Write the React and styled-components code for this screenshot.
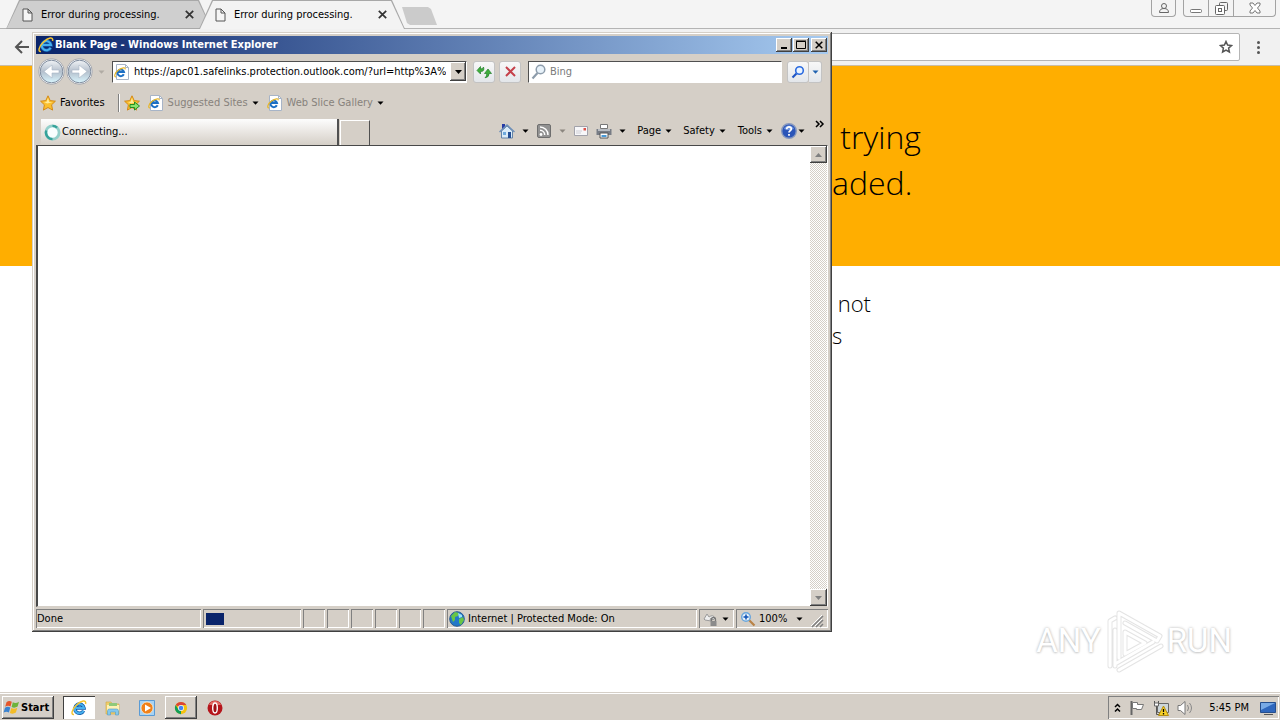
import React from 'react';
import styled, { createGlobalStyle, css } from 'styled-components';

const FACE = '#d5cfc7';
const ui = "'DejaVu Sans Condensed', Tahoma, 'Noto Sans', sans-serif";

const Global = createGlobalStyle`
  * { box-sizing: border-box; }
  body { margin: 0; background: #fff; color: #000; font: 11px/14px ${ui}; }
  button, input { font: inherit; color: inherit; padding: 0; margin: 0; border: 0; background: none; outline: 0; }
  svg { display: block; flex: none; }
`;

const raised = css`
  background: ${FACE};
  box-shadow: inset -1px -1px #404040, inset 1px 1px #fff, inset -2px -2px #808080;
`;
const sunken = css`
  box-shadow: inset 1px 1px #808080, inset -1px -1px #fff;
`;

const Desktop = styled.div`
  position: relative;
  min-height: 100vh;
  display: flex;
  flex-direction: column;
  overflow: hidden;
`;

/* ---------- Chrome ---------- */
const TabStrip = styled.header`
  display: flex;
  align-items: flex-start;
  height: 29px;
  padding-left: 6px;
  background: linear-gradient(#b4b4b4, #b4b4b4) bottom / 100% 1px no-repeat #f4f4f4;
`;
const ChromeTab = styled.div`
  position: relative;
  z-index: ${p => (p.$active ? 1 : 0)};
  display: flex;
  align-items: center;
  gap: 8px;
  width: 206px;
  height: 29px;
  padding: 0 18px 0 16px;
  & + & { margin-left: -13px; }
  &::before, &::after {
    content: '';
    position: absolute;
    z-index: -1;
    inset: 0;
    background: #a8a8a8;
    clip-path: polygon(0 100%, 13px 0, calc(100% - 13px) 0, 100% 100%);
  }
  &::after {
    inset: 1px 1px ${p => (p.$active ? '0' : '1px')};
    background: ${p => (p.$active ? '#f3f3f3' : '#cfcfcf')};
  }
`;
const TabTitle = styled.span`flex: 1; white-space: nowrap;`;
const IconButton = styled.button`
  display: flex;
  align-items: center;
  justify-content: center;
  flex: none;
`;
const NewTab = styled.button`
  width: 35px;
  height: 18px;
  margin: 7px 0 0 -3px;
  background: #cbcbcb;
  clip-path: polygon(0 0, 26px 0, 29px 2px, 100% 100%, 8px 100%, 5px 16px);
`;
const FrameControls = styled.div`
  display: flex;
  margin-left: auto;
  padding-right: 4px;
`;
const FrameGroup = styled.div`
  display: flex;
  height: 17px;
  margin-left: 7px;
  border: 1px solid #a3a3a3;
  border-top: 0;
  border-radius: 0 0 4px 4px;
`;
const FrameButton = styled(IconButton)`
  width: ${p => p.$w || 24}px;
  & + & { border-left: 1px solid #a3a3a3; }
`;
const Toolbar = styled.div`
  display: flex;
  align-items: center;
  gap: 12px;
  height: 37px;
  padding: 0 14px;
  background: #f1f1f1;
  border-bottom: 1px solid #c9bda6;
`;
const Omnibox = styled.label`
  display: flex;
  align-items: center;
  flex: 1;
  height: 28px;
  padding-right: 6px;
  background: #fff;
  border: 1px solid #b5b5b5;
  border-radius: 2px;
  input { flex: 1; }
`;
const Page = styled.main`
  flex: 1;
  font-family: 'Open Sans', 'Noto Sans', sans-serif;
  font-weight: 300;
  white-space: pre;
`;
const Banner = styled.h1`
  height: 200px;
  margin: 0;
  padding: 48px 0 0 65%;
  background: #ffae00;
  font-size: 32px;
  line-height: 46px;
  font-weight: 300;
`;
const Detail = styled.p`
  margin: 0;
  padding: 21px 0 0 65%;
  font-size: 22px;
  line-height: 32px;
`;

/* ---------- Watermark ---------- */
const Watermark = styled.div`
  position: absolute;
  right: 48px;
  bottom: 44px;
  display: flex;
  align-items: center;
  gap: 2px;
  height: 70px;
  color: #fff;
  font: 33px/40px Roboto, 'Liberation Sans', sans-serif;
  text-shadow: 0 0 3px #b4b4b4, 0 1px 2px #ddd;
`;

/* ---------- Internet Explorer ---------- */
const Window = styled.section`
  position: absolute;
  z-index: 2;
  left: 32px;
  top: 32px;
  width: 800px;
  height: 600px;
  display: flex;
  flex-direction: column;
  padding: 4px;
  background: ${FACE};
  box-shadow: inset -1px -1px #404040, inset 1px 1px ${FACE}, inset -2px -2px #808080, inset 2px 2px #fff;
`;
const TitleBar = styled.div`
  display: flex;
  align-items: center;
  gap: 1px;
  height: 18px;
  padding: 0 1px 0 2px;
  background: linear-gradient(90deg, #0a246a, #a6caf0);
  color: #fff;
  font-weight: 700;
`;
const WindowTitle = styled.span`flex: 1;`;
const Caption = styled(IconButton)`
  ${raised}
  width: 16px;
  height: 14px;
  margin-left: ${p => (p.$gap ? 1 : 0)}px;
`;
const NavRow = styled.div`
  display: flex;
  align-items: center;
  height: 35px;
  padding: 0 6px 0 2px;
`;
const HistoryButtons = styled.div`
  display: flex;
  align-items: center;
  gap: 1px;
  width: 74px;
`;
const Recent = styled(IconButton)`margin-left: 4px;`;
const Field = styled.label`
  display: flex;
  align-items: center;
  height: 22px;
  background: #fff;
  border: 1px solid #fff;
  border-top-color: #505050;
  border-left-color: #505050;
  input { flex: 1; min-width: 0; }
`;
const Address = styled(Field)`
  flex: 1;
  gap: 4px;
  padding-left: 1px;
`;
const Search = styled(Field)`
  width: 254px;
  margin: 0 5px 0 7px;
  gap: 3px;
  padding-left: 2px;
  input::placeholder { color: #7b7b7b; opacity: 1; }
`;
const DropButton = styled(IconButton)`
  ${raised}
  width: 16px;
  height: 19px;
`;
const GlassButton = styled(IconButton)`
  width: ${p => p.$w || 22}px;
  height: 22px;
  margin-left: ${p => (p.$joined ? 0 : p.$gap || 0)}px;
  background: linear-gradient(#f8f8f8, #e3e6ea);
  border: 1px solid #c3c3c3;
  border-left-width: ${p => (p.$joined ? 0 : 1)}px;
  border-radius: ${p => (p.$joined ? '0 3px 3px 0' : '3px')};
`;
const FavRow = styled.div`
  display: flex;
  align-items: center;
  height: 28px;
  padding-left: 4px;
`;
const BarButton = styled.button`
  display: flex;
  align-items: center;
  gap: ${p => p.$gap || 4}px;
  margin-right: ${p => p.$after || 0}px;
  color: ${p => (p.$muted ? '#87827c' : '#000')};
  white-space: nowrap;
`;
const Divider = styled.span`
  width: 2px;
  height: 18px;
  margin-right: 4px;
  border-left: 1px solid #808080;
  border-right: 1px solid #fff;
`;
const TabRow = styled.div`
  display: flex;
  align-items: flex-end;
  height: 28px;
  padding: 0 3px 0 5px;
`;
const IeTab = styled.div`
  display: flex;
  align-items: center;
  gap: 1px;
  width: 298px;
  height: 26px;
  padding-left: 3px;
  border-right: 2px solid #505050;
  background: linear-gradient(#fdfdfd, ${FACE});
`;
const IeNewTab = styled.button`
  width: 30px;
  height: 25px;
  margin-left: 1px;
  border: solid #fff;
  border-width: 1px 0 0 1px;
  border-right: 1px solid #505050;
`;
const Commands = styled.div`
  display: flex;
  align-items: center;
  align-self: stretch;
  margin-left: auto;
`;
const More = styled.button`
  align-self: flex-start;
  margin-left: 9px;
`;
const Viewport = styled.div`
  display: flex;
  justify-content: flex-end;
  flex: 1;
  background: #fff;
  border: 2px solid #484848;
  border-right: 1px solid #fff;
  border-bottom: 1px solid ${FACE};
  border-top-width: 1px;
`;
const Scrollbar = styled.div`
  display: flex;
  flex-direction: column;
  justify-content: space-between;
  width: 17px;
  background: repeating-conic-gradient(#fff 0 25%, #d5cfc7 0 50%) 0 0 / 2px 2px;
`;
const ScrollButton = styled(IconButton)`
  ${raised}
  width: 17px;
  height: 17px;
`;
const StatusBar = styled.footer`
  display: flex;
  gap: 2px;
  height: 21px;
  padding-top: 2px;
`;
const Panel = styled.div`
  ${sunken}
  display: flex;
  align-items: center;
  gap: 3px;
  width: ${p => p.$w}px;
  padding: 0 ${p => p.$pad || 1}px;
  ${p => p.$grow && 'flex: 1;'}
  white-space: nowrap;
`;
const Progress = styled.span`
  width: 18px;
  height: 12px;
  background: #0a246a;
`;
const Push = styled.span`flex: 1;`;

/* ---------- Taskbar ---------- */
const Taskbar = styled.nav`
  display: flex;
  align-items: center;
  gap: 2px;
  height: 28px;
  padding: 2px 1px 0 2px;
  background: ${FACE};
  border-top: 1px solid ${FACE};
  box-shadow: inset 0 1px #fff;
`;
const StartButton = styled.button`
  ${raised}
  display: flex;
  align-items: center;
  gap: 1px;
  width: 52px;
  height: 23px;
  margin-right: 7px;
  padding-left: 1px;
  font-weight: 700;
`;
const TaskButton = styled(IconButton)`
  width: 32px;
  height: 23px;
  ${p => p.$state === 'open' && raised}
  ${p => p.$state === 'active' && css`background: #fff; box-shadow: inset 1px 1px #404040, inset -1px -1px #fff;`}
`;
const Tray = styled.div`
  ${sunken}
  display: flex;
  align-items: center;
  gap: 8px;
  height: 23px;
  margin-left: auto;
  padding: 0 3px 0 6px;
`;
const Clock = styled.time`margin: 0 3px 0 8px;`;

/* ---------- Icons ---------- */
const Svg = ({ s = 16, h, vb, children }) => (
  <svg width={s} height={h || s} viewBox={vb || `0 0 ${s} ${h || s}`} fill="none" aria-hidden="true">{children}</svg>
);
const Arrow = ({ c = '#000', up, big }) => (
  <Svg s={7} h={4}><path d={up ? 'M0 4L3.5 0 7 4z' : big ? 'M0 0h7L3.5 4z' : 'M.5 .5h6L3.5 3.8z'} fill={c} /></Svg>
);
const DocIcon = () => (
  <Svg s={11} h={14}><path d="M1 1h5l4 4v8H1zM6 1v4h4" stroke="#555" fill="#f5f5f5" /></Svg>
);
const Cross = ({ s = 9, c = '#333', w = 1.7 }) => (
  <Svg s={s} vb="0 0 9 9"><path d="M.8 .8l7.4 7.4M8.200 .8L.8 8.200" stroke={c} strokeWidth={w} /></Svg>
);
const IeGlyph = ({ s = 16 }) => (
  <Svg s={s} vb="0 0 16 16">
    <path d="M12.6 10.7A4.6 4.6 0 1 1 13 8H5" stroke="#1259a8" strokeWidth="3.400" />
    <path d="M12.6 10.7A4.6 4.6 0 1 1 13 8H5" stroke="#46b0ee" strokeWidth="2" />
    <path d="M3 14.5C-.5 15 .8 9.500 5.500 5S15.500-.6 14.600 4" stroke="#f4c430" strokeWidth="1.500" />
  </Svg>
);
const IePage = () => (
  <Svg>
    <path d="M2.5.5h9l3 3v12h-12z" fill="#fff" stroke="#a7b4c7" />
    <path d="M11.5.5v3h3" stroke="#a7b4c7" />
    <path d="M9.8 10.3A3.3 3.3 0 1 1 10 8H4" stroke="#1c6fc4" strokeWidth="2" />
    <path d="M2 12.8C-.5 13 1 8.5 4.5 6S12 2.8 11 5.4" stroke="#e6b62a" strokeWidth="1.2" />
  </Svg>
);
const Travel = ({ forward }) => (
  <Svg s={27} h={27}>
    <defs>
      <linearGradient id={forward ? 'tf' : 'tb'} x1="0" y1="0" x2="0" y2="1">
        <stop offset="0" stopColor="#f1f3f6" /><stop offset=".5" stopColor="#b4bfcc" /><stop offset="1" stopColor="#d9f5fd" />
      </linearGradient>
    </defs>
    <circle cx="13.5" cy="13.5" r="12.800" fill="#f3f4f6" stroke="#a6a8ae" />
    <circle cx="13.5" cy="13.5" r="11.300" fill={`url(#${forward ? 'tf' : 'tb'})`} stroke="#7f8c9e" />
    <path d={forward ? 'M6 12h7V7l8 6.500-8 6.500V15H6z' : 'M21 12h-7V7l-8 6.500 8 6.500V15h7z'} fill="#fff" stroke="#a9b7c6" strokeWidth=".6" />
  </Svg>
);
const Star = ({ add }) => (
  <Svg>
    <path d="M8 .8l2.2 4.8 5.2.6-3.8 3.6 1 5.3L8 12.5l-4.6 2.6 1-5.3L.6 6.2l5.2-.6z" fill="#fbc02e" stroke="#d48a18" />
    <path d="M8 2.8L9.2 7l3.3.2-5.3 1.3L4 7l2.6-.3z" fill="#ffeb9a" />
    {add && <path d="M6 9.5h4.5V7l5 4-5 4v-2.5H6z" fill="#8be36c" stroke="#248d22" />}
  </Svg>
);
const Refresh = () => (
  <Svg>
    <path d="M1 6.500L4.500 2.500V5Q7 5 7.500 3 9 7.500 4.500 7.500V10z" fill="#3fae3c" stroke="#23802b" strokeWidth=".7" />
    <path d="M12 5l3.500 4.500H13.200Q13 13.500 9 13.800 11 12.500 10.800 9.500H8.500z" fill="#3fae3c" stroke="#23802b" strokeWidth=".7" />
  </Svg>
);
const Magnifier = ({ c = '#8d9cab', fill = '#e8f2fa', plus }) => (
  <Svg>
    <path d={plus ? 'M9 9l5.5 5.5' : 'M6.5 9L1.5 14.5'} stroke={plus ? '#b98245' : c} strokeWidth="2.2" />
    <circle cx={plus ? 6 : 9.5} cy={plus ? 6 : 5.5} r="4.3" fill={fill} stroke={c} strokeWidth="1.5" />
    {plus && <path d="M6 3.5v5M3.5 6h5" stroke="#0c50b5" strokeWidth="1.5" />}
  </Svg>
);
const SearchGo = () => (
  <Svg s={14} vb="0 0 14 14">
    <path d="M5.500 8.500L1.500 12.500" stroke="#1f55c4" strokeWidth="2.200" />
    <circle cx="8.500" cy="5.500" r="3.800" fill="#eaf4ff" stroke="#2a6ae0" strokeWidth="1.600" />
  </Svg>
);
const Spinner = () => (
  <Svg s={17}>
    <circle cx="8.5" cy="8.5" r="6.6" stroke="#93cfca" strokeWidth="2.800" fill="#f8ffff" />
    <path d="M2.3 6.500A6.600 6.600 0 0 0 8.500 15.100M8.500 1.900A6.600 6.600 0 0 1 13 3.700" stroke="#35a29a" strokeWidth="2.400" />
  </Svg>
);
const Home = () => (
  <Svg>
    <path d="M3 1h3v5H3z" fill="#263ba5" />
    <path d="M2.5 8L8 3l5.5 5v7h-11z" fill="#d9ebf8" stroke="#6484a8" />
    <path d="M.5 9L8 2l7.5 7" stroke="#6d8fb8" strokeWidth="1.400" />
    <path d="M4 9h3v3H4z" fill="#6ea9dc" /><path d="M9 9h3v6H9z" fill="#234e94" />
  </Svg>
);
const Feed = () => (
  <Svg>
    <rect x="1.5" y="1.5" width="13" height="13" rx="1.5" fill="#929292" stroke="#6e6e6e" />
    <circle cx="5" cy="11.5" r="1.4" fill="#fff" />
    <path d="M4 7.3a4.7 4.7 0 0 1 4.7 4.7M4 4a8 8 0 0 1 8 8" stroke="#fff" strokeWidth="1.5" />
  </Svg>
);
const Mail = () => (
  <Svg>
    <path d="M1.5 3.5h13v9h-13z" fill="#f7f7f9" stroke="#a2a2aa" />
    <path d="M3 8h6M3 10h5" stroke="#cfcfd6" /><path d="M10.5 5h2.5v2.5h-2.5z" fill="#dc5148" />
  </Svg>
);
const Printer = () => (
  <Svg>
    <path d="M4.5 1.5h7v4h-7z" fill="#fff" stroke="#777" />
    <path d="M.5 6h15v6H.5z" fill="#777c85" /><path d="M2 6h12v2H2z" fill="#b9bdc3" />
    <path d="M4 10h8v5H4z" fill="#fff" stroke="#555" /><path d="M5.5 12h5v2h-5z" fill="#4999d6" />
  </Svg>
);
const Help = () => (
  <Svg>
    <circle cx="8" cy="8" r="7.3" fill="#2b55b8" stroke="#8698bf" strokeWidth="1.4" />
    <path d="M3 6a5.3 5.3 0 0 1 10 0q-5 2-10 0z" fill="#6f95df" />
    <path d="M5.7 6.2C5.7 3 10.5 3.3 10.3 6 10.2 7.6 8 7.7 8 9.6M8 11v1.8" stroke="#fff" strokeWidth="1.8" />
  </Svg>
);
const Globe = () => (
  <Svg>
    <circle cx="8" cy="8" r="7.3" fill="#2378c8" stroke="#2b5c92" />
    <path d="M2 5l4-4 4 1-1 3-3 1v3l-2 2zM10 8l4-2 1 3-3 5-2-2z" fill="#69c644" />
    <path d="M9 2l4 2v2l-3 1z" fill="#9de3f7" />
  </Svg>
);
const Lock = () => (
  <Svg>
    <path d="M1 8l3-5 2 3q4-3 6 1l-2 2q-2-3-3-1l1 2-6-1z" fill="#eee" stroke="#9a9a9a" />
    <path d="M8.500 10V8.500a2 2 0 0 1 4 0V10" stroke="#777" strokeWidth="1.300" /><path d="M7.500 10h6v5h-6z" fill="#8b8b8b" />
  </Svg>
);
const Flag = () => (
  <Svg s={17}>
    <path d="M3.500 3.200Q6 1.200 8.800 2.800L7.500 7.600Q5 6 2.200 7.800z" fill="#e6562a" />
    <path d="M9.800 3.300q3 1.400 6.200-.6l-1.400 4.900q-3 2-6 .5z" fill="#6db33a" />
    <path d="M2 8.800q2.700-1.800 5.300-.2L5.900 13.400Q3.300 11.800.6 13.600z" fill="#3b83d0" />
    <path d="M8.300 9.100q3 1.500 6-.4l-1.400 4.800q-3 2-6 .5z" fill="#f3bc26" />
  </Svg>
);
const Folder = () => (
  <Svg>
    <path d="M1 2h5l1.500 2H14v10H1z" fill="#efcd6c" stroke="#cfaa45" strokeWidth=".6" />
    <path d="M2 5h12v6H2z" fill="#fff1b4" /><path d="M4 3h8v3H4z" fill="#90c97a" />
    <path d="M2.500 15v-4q0-2 2-2h7q2 0 2 2v4h-3v-3h-5v3z" fill="#83c8ed" stroke="#549cc8" strokeWidth=".6" />
  </Svg>
);
const Player = () => (
  <Svg>
    <path d="M.5.5h15v15H.5z" fill="#a7d3f4" stroke="#5a9bd5" />
    <circle cx="8" cy="8" r="6" fill="#f0811a" stroke="#fff2d8" strokeWidth=".7" /><path d="M6 4.500L12 8l-6 3.500z" fill="#fff" />
  </Svg>
);
const Chrome = () => (
  <Svg s={14} vb="0 0 16 16">
    <circle cx="8" cy="8" r="7" fill="#f4c20d" />
    <path d="M8 8L1.940 4.500A7 7 0 0 1 14.060 4.500H8z" fill="#db4437" />
    <path d="M8 8v7A7 7 0 0 1 1.940 4.500L5 9.800z" fill="#0f9d58" />
    <circle cx="8" cy="8" r="3.400" fill="#f5f5f5" /><circle cx="8" cy="8" r="2.600" fill="#4285f4" />
  </Svg>
);
const Opera = () => (
  <Svg>
    <circle cx="8" cy="8" r="7.500" fill="#b5151b" /><path d="M2 5a6.500 6.500 0 0 1 12 0" fill="#e36a63" />
    <ellipse cx="8" cy="8" rx="2.300" ry="5" fill="#a01015" stroke="#fff" strokeWidth="1.400" />
  </Svg>
);
const PlayMark = () => {
  const d = 'M16 50V5L57 28 54 33 22 15M7 58V13L12 10M12 58V22M16 62L58 38M12 56L50 34M22 24L42 35 22 46z';
  return (
    <Svg s={62} h={66}>
      <path d={d} stroke="#c4c4c4" strokeWidth="5" strokeLinejoin="round" strokeLinecap="round" opacity=".45" />
      <path d={d} stroke="#fff" strokeWidth="3" strokeLinejoin="round" strokeLinecap="round" />
    </Svg>
  );
};

const chromeTabs = ['Error during processing.', 'Error during processing.'];
const menus = [['Page', 11], ['Safety', 12], ['Tools', 8]];

const ExplorerWindow = () => (
  <Window aria-label="Internet Explorer">
    <TitleBar>
      <IeGlyph />
      <WindowTitle>Blank Page - Windows Internet Explorer</WindowTitle>
      <Caption aria-label="Minimize"><Svg s={10}><path d="M2 8h6" stroke="#000" strokeWidth="2" /></Svg></Caption>
      <Caption aria-label="Maximize"><Svg s={10}><path d="M.5 1.500h9v7h-9zM0 1h10" stroke="#000" /></Svg></Caption>
      <Caption $gap aria-label="Close"><Cross s={8} c="#000" w={1.7} /></Caption>
    </TitleBar>
    <NavRow>
      <HistoryButtons>
        <IconButton aria-label="Back"><Travel /></IconButton>
        <IconButton aria-label="Forward"><Travel forward /></IconButton>
        <Recent aria-label="Recent pages"><Arrow c="#b0aba4" /></Recent>
      </HistoryButtons>
      <Address>
        <IePage />
        <input aria-label="Address" defaultValue="https://apc01.safelinks.protection.outlook.com/?url=http%3A%2" />
        <DropButton aria-label="Show addresses"><Arrow big /></DropButton>
      </Address>
      <GlassButton $gap={6} aria-label="Refresh"><Refresh /></GlassButton>
      <GlassButton $gap={4} aria-label="Stop"><Cross s={11} c="#c5404a" w={1.6} /></GlassButton>
      <Search><Magnifier /><input aria-label="Search" placeholder="Bing" /></Search>
      <GlassButton aria-label="Search"><SearchGo /></GlassButton>
      <GlassButton $joined $w={13} aria-label="Search options"><Arrow c="#1f62b0" /></GlassButton>
    </NavRow>
    <FavRow>
      <BarButton $after={13}><Star />Favorites</BarButton>
      <Divider />
      <BarButton $after={8} aria-label="Add to favorites"><Star add /></BarButton>
      <BarButton $muted $after={8}><IePage />Suggested Sites<Arrow /></BarButton>
      <BarButton $muted><IePage />Web Slice Gallery<Arrow /></BarButton>
    </FavRow>
    <TabRow>
      <IeTab><Spinner />Connecting...</IeTab>
      <IeNewTab aria-label="New tab" />
      <Commands>
        <BarButton $gap={7} $after={7} aria-label="Home"><Home /><Arrow /></BarButton>
        <BarButton $gap={7} $after={7} aria-label="Feeds"><Feed /><Arrow c="#8b867f" /></BarButton>
        <BarButton $after={7} aria-label="Read mail"><Mail /></BarButton>
        <BarButton $gap={7} $after={11} aria-label="Print"><Printer /><Arrow /></BarButton>
        {menus.map(([name, after]) => (
          <BarButton key={name} $after={after}>{name}<Arrow /></BarButton>
        ))}
        <BarButton $gap={1} aria-label="Help"><Help /><Arrow /></BarButton>
        <More aria-label="More commands"><Svg s={11} h={14}><path d="M2 4l3 3-3 3M6 4l3 3-3 3" stroke="#000" strokeWidth="1.500" /></Svg></More>
      </Commands>
    </TabRow>
    <Viewport>
      <Scrollbar>
        <ScrollButton aria-label="Scroll up"><Arrow up c="#808080" /></ScrollButton>
        <ScrollButton aria-label="Scroll down"><Arrow big c="#808080" /></ScrollButton>
      </Scrollbar>
    </Viewport>
    <StatusBar>
      <Panel $w={165}>Done</Panel>
      <Panel $w={98} $pad={3}><Progress /></Panel>
      {[0, 1, 2, 3, 4, 5].map(i => <Panel key={i} $w={22} />)}
      <Panel $grow $pad={2}><Globe />Internet | Protected Mode: On</Panel>
      <Panel $w={35} $pad={4}><Lock /><Arrow /></Panel>
      <Panel $w={92} $pad={4}>
        <Magnifier plus c="#6aa6dc" />100%<Push /><Arrow />
        <Svg s={18} h={18}><path d="M6 17L17 6M10 17l7-7M14 17l3-3" stroke="#808080" strokeWidth="1.500" /><path d="M5 16L16 5M9 16l7-7" stroke="#fff" /></Svg>
      </Panel>
    </StatusBar>
  </Window>
);

export default function App() {
  return (
    <Desktop>
      <Global />
      <TabStrip>
        {chromeTabs.map((title, i) => (
          <ChromeTab key={i} $active={i === 1}>
            <DocIcon /><TabTitle>{title}</TabTitle>
            <IconButton aria-label="Close tab"><Cross /></IconButton>
          </ChromeTab>
        ))}
        <NewTab aria-label="New tab" />
        <FrameControls>
          <FrameGroup>
            <FrameButton $w={23} aria-label="Profile"><Svg s={12}><circle cx="6" cy="4" r="2.500" stroke="#666" /><path d="M1.500 10.500Q1.500 6.500 6 6.500t4.500 4z" stroke="#666" fill="#f4f4f4" /></Svg></FrameButton>
          </FrameGroup>
          <FrameGroup>
            <FrameButton aria-label="Minimize"><Svg s={12}><rect x=".5" y="7.500" width="11" height="3" rx="1" stroke="#777" fill="#fff" /></Svg></FrameButton>
            <FrameButton $w={25} aria-label="Restore"><Svg s={13}><rect x="4.500" y=".5" width="8" height="8" rx="1" stroke="#666" /><rect x=".5" y="3.500" width="9" height="9" rx="1" stroke="#666" fill="#fff" /><rect x="3.500" y="6.500" width="3" height="3" stroke="#666" /></Svg></FrameButton>
            <FrameButton $w={42} aria-label="Close"><Svg s={12}><path d="M1 1h3l2 2.500L8 1h3v2L8.500 6 11 9v2H8L6 8.500 4 11H1V9l2.500-3L1 3z" stroke="#777" fill="#fff" /></Svg></FrameButton>
          </FrameGroup>
        </FrameControls>
      </TabStrip>
      <Toolbar>
        <IconButton aria-label="Back"><Svg s={16}><path d="M15 8H2M8 2L2 8l6 6" stroke="#555" strokeWidth="2" /></Svg></IconButton>
        <Omnibox>
          <input aria-label="Address and search bar" />
          <IconButton aria-label="Bookmark"><Svg s={14}><path d="M7 1.500l1.600 3.600 3.900.4-2.900 2.600.8 3.900L7 10 3.600 12l.8-3.900-2.900-2.600 3.900-.4z" stroke="#555" strokeWidth="1.500" /></Svg></IconButton>
        </Omnibox>
        <IconButton aria-label="Menu"><Svg s={14}><g fill="#555"><circle cx="6.500" cy="2.500" r="1.500" /><circle cx="6.500" cy="7.500" r="1.500" /><circle cx="6.500" cy="12.500" r="1.500" /></g></Svg></IconButton>
      </Toolbar>
      <Page>
        <Banner>{' trying\naded.'}</Banner>
        <Detail>{' not\ns'}</Detail>
      </Page>
      <Watermark>
        <span>ANY</span>
        <PlayMark />
        <span>RUN</span>
      </Watermark>
      <ExplorerWindow />
      <Taskbar>
        <StartButton><Flag />Start</StartButton>
        <TaskButton $state="active" aria-label="Internet Explorer"><IeGlyph /></TaskButton>
        <TaskButton aria-label="Files"><Folder /></TaskButton>
        <TaskButton aria-label="Media Player"><Player /></TaskButton>
        <TaskButton $state="open" aria-label="Chrome"><Chrome /></TaskButton>
        <TaskButton aria-label="Opera"><Opera /></TaskButton>
        <Tray>
          <IconButton aria-label="Show hidden icons"><Svg s={7} h={10}><path d="M1 4l2.500-2.500L6 4M1 8.500L3.500 6 6 8.500" stroke="#000" strokeWidth="1.500" /></Svg></IconButton>
          <IconButton aria-label="Action Center"><Svg><path d="M2.500 1v14" stroke="#666" strokeWidth="2" /><path d="M3.500 2.500h5v2h6l-2 5h-5v-1h-4z" fill="#fff" stroke="#777" /></Svg></IconButton>
          <IconButton aria-label="Network"><Svg><path d="M4.500 3.500h11v9h-11z" fill="#cdd6da" stroke="#666" /><path d="M1.500 1v4.500h4V1M3.500 5v9.500H7" stroke="#555" /><path d="M1.500 3h4v3h-4z" fill="#fff" stroke="#666" /><path d="M10.500 6l5 9.500h-10z" fill="#f8d126" stroke="#b28c12" /><path d="M10.500 9v3M10.500 13v1.500" stroke="#000" strokeWidth="1.300" /></Svg></IconButton>
          <IconButton aria-label="Volume"><Svg><path d="M1 5.500h2.500L8 1.500v13l-4.500-4H1z" fill="#fff" stroke="#777" /><path d="M10.500 5q2 3 0 6M12.500 3q4 5 0 10" stroke="#888" /></Svg></IconButton>
          <Clock>5:45 PM</Clock>
          <IconButton aria-label="Show desktop"><Svg><path d="M.5 2.500h15v10H.5z" fill="#2f67bd" stroke="#254e8d" /><path d="M1 3h14L1 10z" fill="#78aae6" /><path d="M4 14.500h9" stroke="#555" /></Svg></IconButton>
        </Tray>
      </Taskbar>
    </Desktop>
  );
}
